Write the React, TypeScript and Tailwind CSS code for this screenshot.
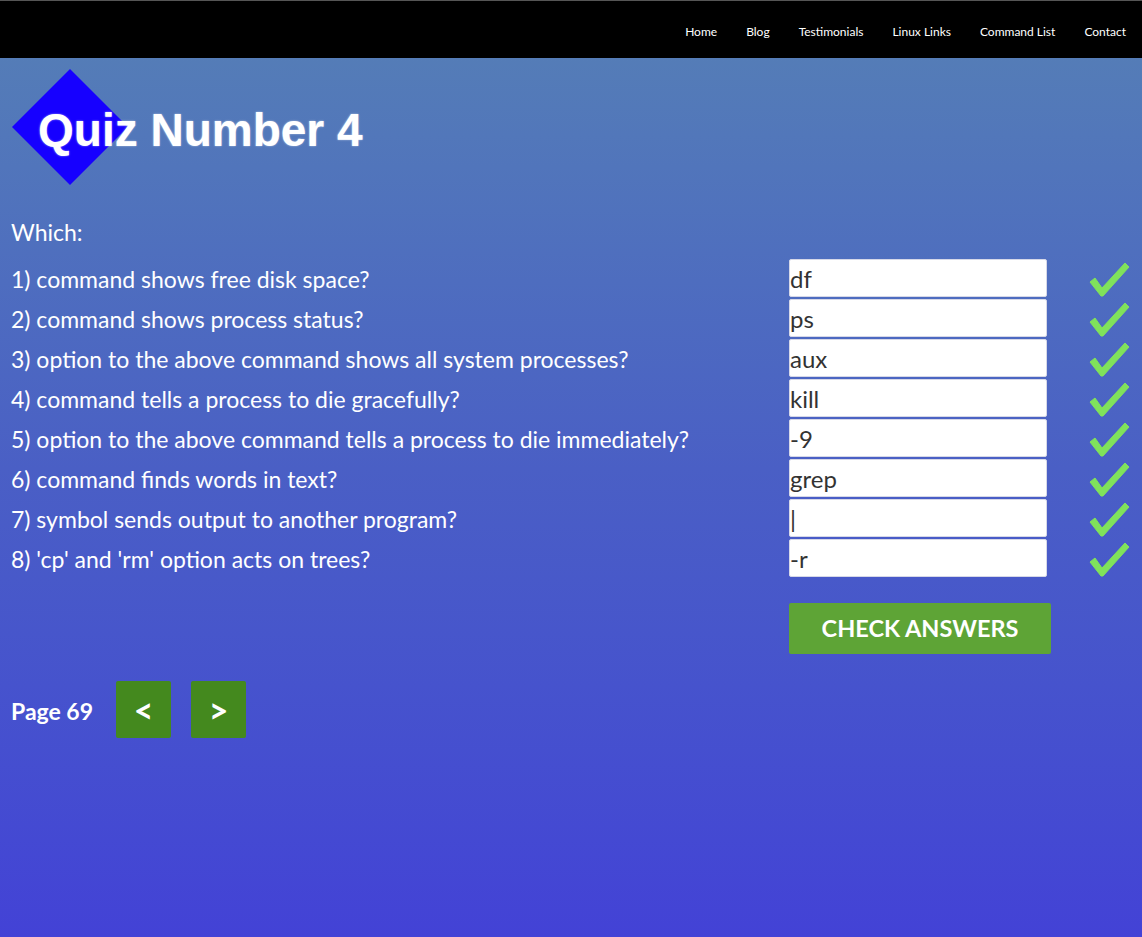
import React from 'react';

const navLinks = ['Home', 'Blog', 'Testimonials', 'Linux Links', 'Command List', 'Contact'];

const questions = [
  { q: '1) command shows free disk space?', a: 'df' },
  { q: '2) command shows process status?', a: 'ps' },
  { q: '3) option to the above command shows all system processes?', a: 'aux' },
  { q: '4) command tells a process to die gracefully?', a: 'kill' },
  { q: '5) option to the above command tells a process to die immediately?', a: '-9' },
  { q: '6) command finds words in text?', a: 'grep' },
  { q: '7) symbol sends output to another program?', a: '|' },
  { q: "8) 'cp' and 'rm' option acts on trees?", a: '-r' },
];

const Tick: React.FC = () => (
  <svg width="42" height="38" viewBox="0 0 42 38" className="block">
    <path
      d="M1 21 L6 17 L13 27 L36 2 L40 6 L14 35 L12 35 Z"
      fill="#80e25b"
      stroke="#80e25b"
      strokeWidth="1"
      strokeLinejoin="round"
    />
  </svg>
);

export default function App() {
  return (
    <div
      className="min-h-[937px] w-full bg-gradient-to-b from-[#5680b5] via-[#4a5fc5] to-[#4342d6] font-['Lato','Noto_Sans',sans-serif] text-white"
    >
      <nav className="flex h-[58px] items-center justify-end border-t border-[#555] bg-black pt-[4px] pr-[16px]">
        <ul className="flex gap-[29px] text-[12px]">
          {navLinks.map(link => (
            <li key={link}>
              <a href="#" className="text-white">{link}</a>
            </li>
          ))}
        </ul>
      </nav>

      <header className="relative h-[160px]">
        <div className="absolute left-[29px] top-[28px] h-[82px] w-[82px] rotate-45 bg-[#1600ff]" />
        <h1 className="absolute left-[38px] top-[49px] font-['Liberation_Sans',Arial,sans-serif] text-[46px] font-bold leading-none text-white [text-shadow:0_0_2px_rgba(255,255,255,0.6)]">
          Quiz Number 4
        </h1>
      </header>

      <main className="pl-[11px]">
        <p className="mb-[13px] text-[23px] leading-[28px]">Which:</p>

        <div className="grid grid-cols-[778px_258px_auto] gap-y-[2px]">
          {questions.map(item => (
            <React.Fragment key={item.q}>
              <div className="flex h-[38px] items-center pt-[2px] text-[23px]">{item.q}</div>
              <input
                defaultValue={item.a}
                className="h-[38px] w-[258px] rounded-[2px] border border-[#d6d8e8] bg-white px-0 text-[24px] text-[#333] outline-none"
              />
              <div className="flex h-[38px] items-center pl-[42px] pt-[4px]">
                <Tick />
              </div>
            </React.Fragment>
          ))}
        </div>

        <div className="mt-[26px] pl-[778px]">
          <button className="h-[51px] w-[262px] rounded-[2px] bg-[#5ea436] text-[23.5px] font-bold text-white">
            CHECK ANSWERS
          </button>
        </div>

        <div className="mt-[27px] flex items-center">
          <span className="w-[105px] pt-[3px] text-[23px] font-bold">Page 69</span>
          <button className="h-[57px] w-[55px] rounded-[2px] bg-[#44891e] text-[34px] font-bold leading-none text-white">&lt;</button>
          <button className="ml-[20px] h-[57px] w-[55px] rounded-[2px] bg-[#44891e] text-[34px] font-bold leading-none text-white">&gt;</button>
        </div>
      </main>
    </div>
  );
}
